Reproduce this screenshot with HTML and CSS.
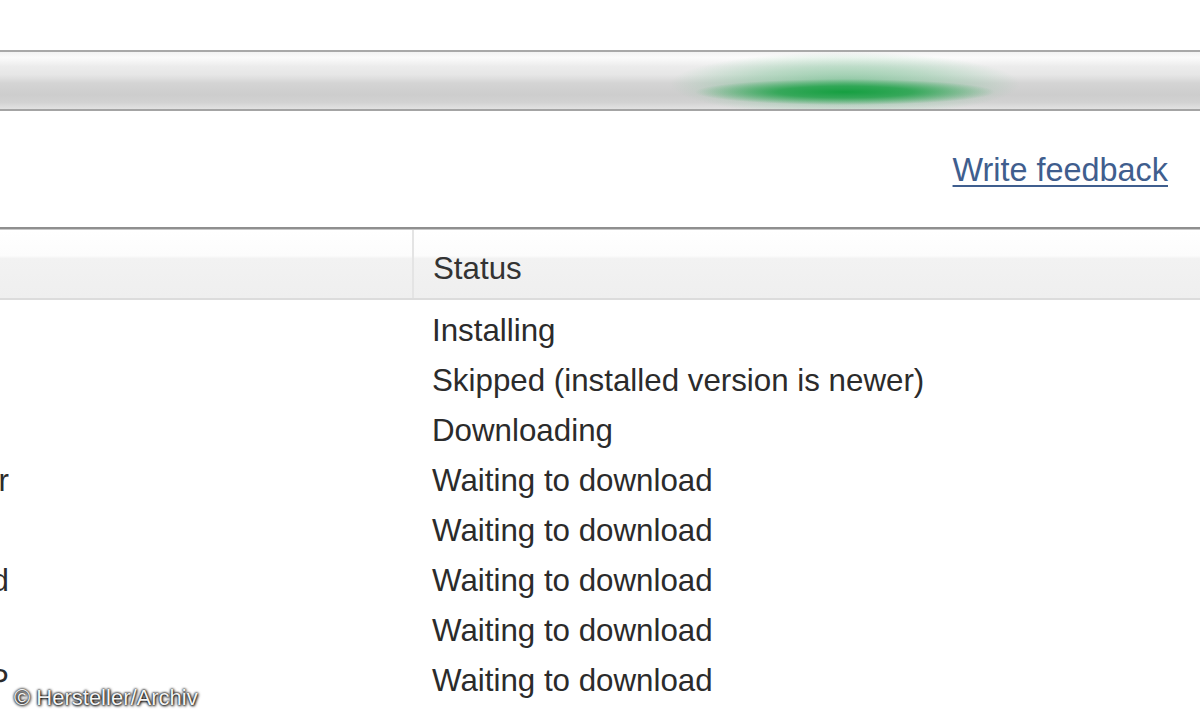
FILE: index.html
```html
<!DOCTYPE html>
<html>
<head>
<meta charset="utf-8">
<link rel="stylesheet" href="styles.css">
</head>
<body>
<div class="top"></div>
<div class="progress"></div>
<div class="feedback"><a class="link" href="#">Write feedback</a></div>
<div class="divider"></div>
<div class="thead">
  <div class="th name-h"></div>
  <div class="th status-h">Status</div>
</div>
<div class="tbody">
  <div class="row"><div class="name"></div><div class="status">Installing</div></div>
  <div class="row"><div class="name"></div><div class="status">Skipped (installed version is newer)</div></div>
  <div class="row"><div class="name"></div><div class="status">Downloading</div></div>
  <div class="row"><div class="name"><span class="clip"><span>Windows Live Toolbar</span></span></div><div class="status">Waiting to download</div></div>
  <div class="row"><div class="name"></div><div class="status">Waiting to download</div></div>
  <div class="row"><div class="name"><span class="clip"><span>Windows Live Download</span></span></div><div class="status">Waiting to download</div></div>
  <div class="row"><div class="name"></div><div class="status">Waiting to download</div></div>
  <div class="row"><div class="name"><span class="clip"><span>Windows Live SMTP</span></span></div><div class="status">Waiting to download</div></div>
</div>
<div class="watermark">© Hersteller/Archiv</div>
</body>
</html>
```
FILE: styles.css
```css
html, body {
  margin: 0;
  padding: 0;
}
body {
  width: 1200px;
  height: 720px;
  overflow: hidden;
  background: #ffffff;
  font-family: "Liberation Sans", Arial, sans-serif;
  color: #2b2b2b;
  position: relative;
}
.top {
  height: 50px;
}
.progress {
  height: 57px;
  border-top: 2px solid #a9a9a9;
  border-bottom: 2px solid #a4a4a4;
  background:
    radial-gradient(ellipse 150px 13px at 845px 40px, rgba(18,158,62,0.97) 0%, rgba(18,158,62,0.75) 45%, rgba(18,158,62,0) 100%),
    radial-gradient(ellipse 175px 32px at 845px 32px, rgba(70,180,110,0.55) 0%, rgba(70,180,110,0.28) 55%, rgba(70,180,110,0) 100%),
    linear-gradient(to bottom, #f3f3f3 0%, #fbfbfb 10%, #ececec 25%, #e6e6e6 40%, #d4d4d4 55%, #cdcdcd 75%, #d2d2d2 88%, #e2e2e2 100%);
}
.feedback {
  height: 116px;
  display: flex;
  justify-content: flex-end;
  align-items: center;
  padding-right: 32px;
}
.link {
  font-size: 32.4px;
  color: #3f5e8e;
  text-decoration: underline;
  text-underline-offset: 4px;
  text-decoration-thickness: 2px;
  margin-top: 2px;
}
.divider {
  height: 2px;
  background: #8f8f8f;
  border-bottom: 1px solid #c8c8c8;
}
.thead {
  display: flex;
  height: 68px;
  border-bottom: 2px solid #dcdcdc;
  background: linear-gradient(to bottom, #ffffff 0%, #fcfcfc 38%, #f2f2f2 42%, #efefef 100%);
}
.th {
  display: flex;
  align-items: center;
  font-size: 31.3px;
  color: #333333;
}
.name-h {
  width: 412px;
  border-right: 2px solid #e4e4e4;
}
.status-h {
  padding-left: 19px;
  padding-top: 10px;
}
.tbody {
  padding-top: 6px;
}
.row {
  display: flex;
  height: 50px;
  align-items: center;
  font-size: 31.3px;
}
.name {
  width: 414px;
  flex: none;
}
.clip {
  display: flex;
  justify-content: flex-end;
  width: 9px;
  overflow: hidden;
  white-space: nowrap;
}
.clip span {
  flex: none;
}
.status {
  padding-left: 18px;
  white-space: nowrap;
}
.watermark {
  position: absolute;
  left: 14px;
  bottom: 11px;
  font-size: 22px;
  line-height: 22px;
  color: #f4f4f4;
  text-shadow: 0 0 2px #000, 0 0 3px #000, 1px 1px 3px #333;
}
```
